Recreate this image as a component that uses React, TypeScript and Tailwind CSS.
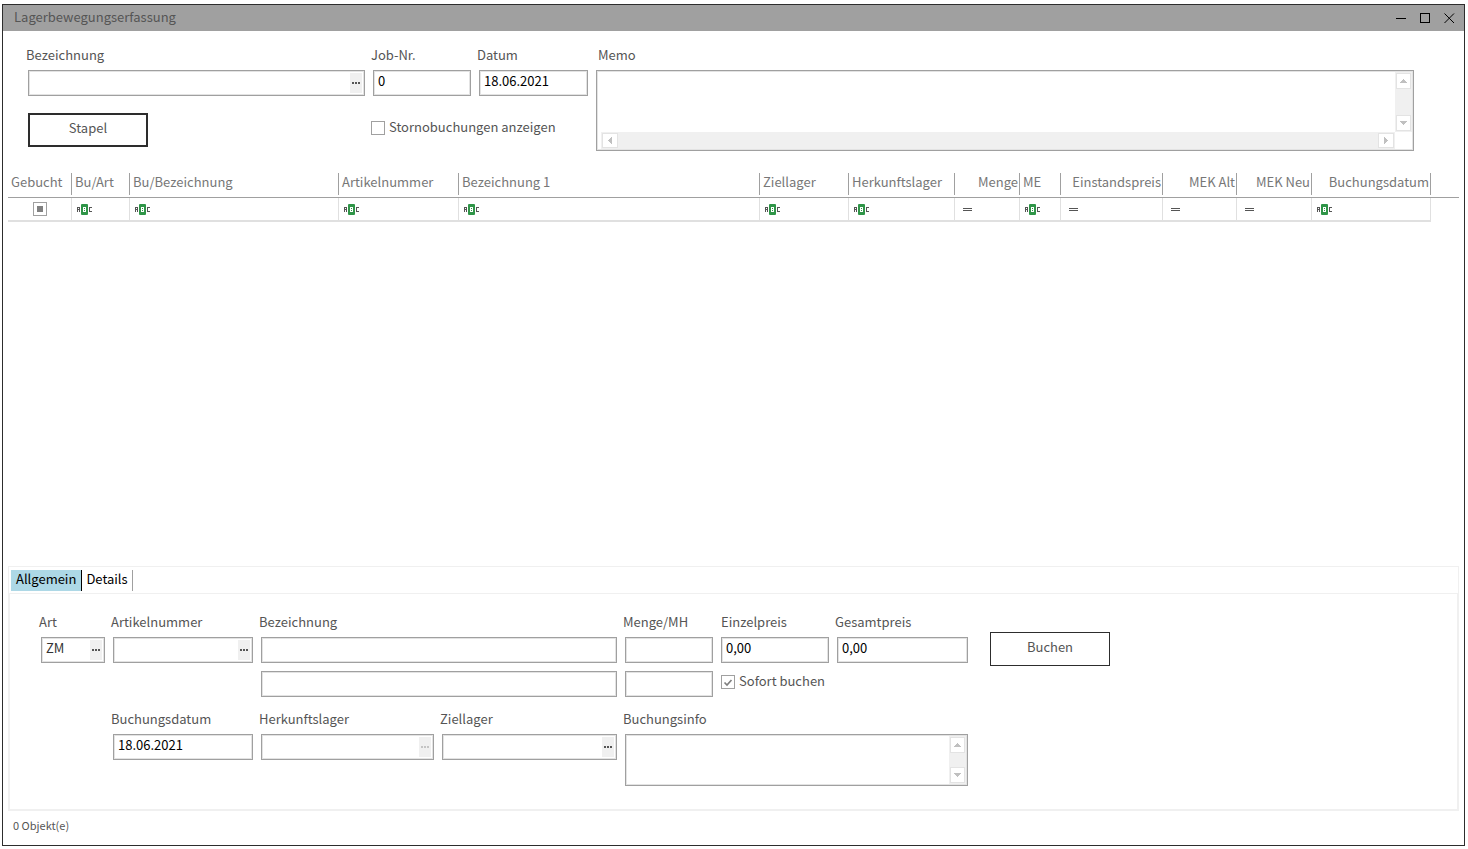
import React, { useEffect, useRef, useState } from 'react';

type FilterKind = 'check' | 'text' | 'number';

interface Column {
  title: string;
  width: string;
  filter: FilterKind;
  right?: boolean;
}

const columns: Column[] = [
  { title: 'Gebucht', width: 'w-[64px]', filter: 'check' },
  { title: 'Bu/Art', width: 'w-[58px]', filter: 'text' },
  { title: 'Bu/Bezeichnung', width: 'w-[209px]', filter: 'text' },
  { title: 'Artikelnummer', width: 'w-[120px]', filter: 'text' },
  { title: 'Bezeichnung 1', width: 'w-[301px]', filter: 'text' },
  { title: 'Ziellager', width: 'w-[89px]', filter: 'text' },
  { title: 'Herkunftslager', width: 'w-[106px]', filter: 'text' },
  { title: 'Menge', width: 'w-[65px]', filter: 'number', right: true },
  { title: 'ME', width: 'w-[41px]', filter: 'text' },
  { title: 'Einstandspreis', width: 'w-[102px]', filter: 'number', right: true },
  { title: 'MEK Alt', width: 'w-[74px]', filter: 'number', right: true },
  { title: 'MEK Neu', width: 'w-[75px]', filter: 'number', right: true },
  { title: 'Buchungsdatum', width: 'w-[119px]', filter: 'text', right: true },
];

const boxClass =
  'flex border border-[#a0a0a0] bg-white shadow-[inset_0_0_0_1px_#e3e3e3]';

const AbcIcon = () => (
  <svg width="15" height="11" viewBox="0 0 15 11" shapeRendering="crispEdges">
    <path d="M4 0h7v11H4z" fill="#5fb074" />
    <path d="M5 0h5v1h1v9h-1v1H5v-1H4V1h1z" fill="#2f9548" />
    <path d="M0 3h3v5H2V6H1v2H0zM1 4v1h1V4z" fill="#555" fillRule="evenodd" />
    <path d="M6 3h3v5H6zM7 4v1h1V4zM7 6v1h1V6z" fill="#fff" fillRule="evenodd" />
    <path d="M12 3h3v1h-2v3h2v1h-3z" fill="#555" />
  </svg>
);

const EqualsIcon = () => (
  <svg width="9" height="3" viewBox="0 0 9 3" shapeRendering="crispEdges">
    <path d="M0 0h9v1H0zM0 2h9v1H0z" fill="#555" />
  </svg>
);

const arrows = {
  up: 'M3 0h1v1h1v1h1v1h1v1H0V3h1V2h1V1h1z',
  down: 'M0 0h7v1H6v1H5v1H4v1H3V3H2V2H1V1H0z',
  left: 'M3 0h1v7H3V6H2V5H1V4H0V3h1V2h1V1h1z',
  right: 'M0 0h1v1h1v1h1v1h1v1H3v1H2v1H1v1H0z',
};

const ScrollButton = ({ dir }: { dir: keyof typeof arrows }) => {
  const vertical = dir === 'up' || dir === 'down';
  return (
    <button
      type="button"
      aria-label={`scroll ${dir}`}
      className={`flex shrink-0 items-center justify-center border border-[#e3e3e3] bg-white ${
        vertical ? 'h-4 w-[15px]' : 'h-[15px] w-4'
      }`}
    >
      <svg width={vertical ? 7 : 4} height={vertical ? 4 : 7} shapeRendering="crispEdges">
        <path d={arrows[dir]} fill="#c0c0c0" />
      </svg>
    </button>
  );
};

const VerticalBar = () => (
  <div className="flex w-[17px] shrink-0 flex-col items-center justify-between bg-[#f0f0f0] py-px">
    <ScrollButton dir="up" />
    <ScrollButton dir="down" />
  </div>
);

interface LabelProps {
  id: string;
  text: string;
  indent?: string;
}

const FieldLabel = ({ id, text, indent = '-ml-0.5' }: LabelProps) => (
  <label htmlFor={id} className={`mb-[5px] block leading-5 ${indent}`}>
    {text}
  </label>
);

interface TextBoxProps {
  id: string;
  value?: string;
  lookup?: boolean;
  disabled?: boolean;
  color?: string;
  label?: string;
}

const TextBox = ({ id, value = '', lookup, disabled, color = 'text-black', label }: TextBoxProps) => (
  <div className={`${boxClass} h-[26px]`}>
    <input
      id={id}
      type="text"
      aria-label={label}
      defaultValue={value}
      disabled={disabled}
      className={`min-w-0 flex-1 bg-transparent px-1 pb-1 outline-none ${color}`}
    />
    {lookup && (
      <button
        type="button"
        aria-label="Auswahl"
        disabled={disabled}
        className="m-0.5 flex w-3 shrink-0 items-center justify-center bg-[#f0f0f0]"
      >
        <svg width="8" height="2" shapeRendering="crispEdges">
          <path d="M0 0h2v2H0zM3 0h2v2H3zM6 0h2v2H6z" fill={disabled ? '#c4c4c4' : '#555'} />
        </svg>
      </button>
    )}
  </div>
);

const Field = ({ indent, className = '', ...box }: TextBoxProps & LabelProps & { className?: string }) => (
  <div className={className}>
    <FieldLabel id={box.id} text={box.text} indent={indent} />
    <TextBox {...box} />
  </div>
);

const CheckBox = ({ id, text, checked = false }: { id: string; text: string; checked?: boolean }) => {
  const [on, setOn] = useState(checked);
  return (
    <div className="flex items-center gap-1">
      <span className="grid">
        <input
          id={id}
          type="checkbox"
          checked={on}
          onChange={() => setOn(!on)}
          className="col-start-1 row-start-1 size-3.5 appearance-none border border-[#a0a0a0] bg-white"
        />
        {on && (
          <svg viewBox="0 0 14 14" className="pointer-events-none col-start-1 row-start-1 size-3.5">
            <path d="M3.5 7.5l2.5 2.5l4.5-5" fill="none" stroke="#808080" strokeWidth="1.7" />
          </svg>
        )}
      </span>
      <label htmlFor={id} className="pb-0.5 leading-5">{text}</label>
    </div>
  );
};

const MixedCheckBox = () => {
  const ref = useRef<HTMLInputElement>(null);

  useEffect(() => {
    if (ref.current) ref.current.indeterminate = true;
  }, []);

  return (
    <span className="mx-auto grid place-items-center">
      <input
        ref={ref}
        type="checkbox"
        aria-label="Gebucht filtern"
        className="col-start-1 row-start-1 size-3.5 appearance-none border border-[#a0a0a0] bg-white"
      />
      <span className="pointer-events-none col-start-1 row-start-1 size-1.5 bg-[#808080]" />
    </span>
  );
};

const FilterCell = ({ column }: { column: Column }) => {
  if (column.filter === 'check') return <MixedCheckBox />;
  const isText = column.filter === 'text';
  return (
    <button type="button" aria-label={`${column.title} filtern`} className={isText ? 'ml-[5px]' : 'ml-2'}>
      {isText ? <AbcIcon /> : <EqualsIcon />}
    </button>
  );
};

const TitleBar = () => (
  <header className="flex h-[26px] items-center justify-between bg-[#a0a0a0] pr-[9px] pl-[11px]">
    <h1 className="pb-0.5 leading-5">Lagerbewegungserfassung</h1>
    <div className="flex gap-[13px] text-black">
      <button type="button" aria-label="Minimieren">
        <svg width="11" height="11" shapeRendering="crispEdges">
          <path d="M0 5h10v1H0z" fill="currentColor" />
        </svg>
      </button>
      <button type="button" aria-label="Maximieren">
        <svg width="11" height="11" shapeRendering="crispEdges">
          <path d="M.5.5h9v9h-9z" fill="none" stroke="currentColor" />
        </svg>
      </button>
      <button type="button" aria-label="Schließen">
        <svg width="11" height="11">
          <path d="M.5.5l9.5 9.5M10 .5L.5 10" fill="none" stroke="currentColor" />
        </svg>
      </button>
    </div>
  </header>
);

const HeadForm = () => (
  <section className="flex gap-2 pt-3.5 pr-[50px] pl-[25px]">
    <div>
      <div className="flex gap-2">
        <Field id="bezeichnung" text="Bezeichnung" lookup className="w-[337px]" />
        <Field id="jobnr" text="Job-Nr." value="0" className="w-[98px]" />
        <Field id="datum" text="Datum" value="18.06.2021" className="w-[109px]" />
      </div>
      <div className="mt-[17px] flex items-start">
        <button type="button" className="h-[34px] w-[120px] border-2 border-[#2d2d2d] pb-1 leading-5">
          Stapel
        </button>
        <div className="mt-1 ml-[223px]">
          <CheckBox id="storno" text="Stornobuchungen anzeigen" />
        </div>
      </div>
    </div>
    <div className="min-w-0 flex-1">
      <FieldLabel id="memo" text="Memo" indent="ml-0.5" />
      <div className={`${boxClass} h-[81px] p-px`}>
        <div className="flex min-w-0 flex-1 flex-col">
          <textarea id="memo" className="min-h-0 flex-1 resize-none overflow-hidden bg-transparent px-1 text-black outline-none" />
          <div className="ml-[3px] flex h-[17px] items-center justify-between bg-[#f0f0f0] px-px">
            <ScrollButton dir="left" />
            <ScrollButton dir="right" />
          </div>
        </div>
        <div className="flex pb-[17px]">
          <VerticalBar />
        </div>
      </div>
    </div>
  </section>
);

const BookingTable = () => (
  <table className="w-full table-fixed border-separate border-spacing-0 text-[#777]">
    <colgroup>
      {columns.map((c) => (
        <col key={c.title} className={c.width} />
      ))}
      <col />
    </colgroup>
    <thead>
      <tr>
        {columns.map((c) => (
          <th key={c.title} className="border-b border-[#a0a0a0] p-0 pb-0.5 font-normal whitespace-nowrap">
            <div
              className={`h-[22px] border-r border-[#a0a0a0] leading-[18px] ${
                c.right ? 'pr-px text-right' : 'pl-[3px] text-left'
              }`}
            >
              {c.title}
            </div>
          </th>
        ))}
        <td className="border-b border-[#a0a0a0] p-0" />
      </tr>
    </thead>
    <tbody>
      <tr>
        {columns.map((c) => (
          <td key={c.title} className="border-b-2 border-[#e0e0e0] p-0">
            <div className="flex h-[22px] items-center border-r border-[#e0e0e0]">
              <FilterCell column={c} />
            </div>
          </td>
        ))}
        <td className="p-0" />
      </tr>
    </tbody>
  </table>
);

const BookingForm = () => (
  <div className="flex items-start gap-[22px] px-[31px] pt-[18px] pb-[23px]">
    <div className="grid grid-cols-[64px_140px_173px_175px_88px_108px_131px] gap-x-2">
      <Field id="art" text="Art" value="ZM" lookup color="text-[#333]" />
      <Field id="artikelnummer" text="Artikelnummer" lookup />
      <Field id="pos-bezeichnung" text="Bezeichnung" className="col-span-2" />
      <Field id="menge" text="Menge/MH" />
      <Field id="einzelpreis" text="Einzelpreis" value="0,00" indent="ml-0" />
      <Field id="gesamtpreis" text="Gesamtpreis" value="0,00" />

      <div className="col-span-2 col-start-3 mt-2">
        <TextBox id="bezeichnung2" label="Bezeichnung 2" />
      </div>
      <div className="mt-2">
        <TextBox id="menge2" label="MH" />
      </div>
      <div className="col-span-2 mt-2">
        <CheckBox id="sofort" text="Sofort buchen" checked />
      </div>

      <Field id="buchungsdatum" text="Buchungsdatum" value="18.06.2021" className="col-start-2 mt-3" />
      <Field id="herkunftslager" text="Herkunftslager" lookup disabled className="mt-3" />
      <Field id="ziellager" text="Ziellager" lookup className="mt-3" />
      <div className="col-span-3 mt-3">
        <FieldLabel id="buchungsinfo" text="Buchungsinfo" />
        <div className={`${boxClass} h-[52px] p-px`}>
          <textarea id="buchungsinfo" className="min-w-0 flex-1 resize-none overflow-hidden bg-transparent px-1 text-black outline-none" />
          <VerticalBar />
        </div>
      </div>
    </div>
    <button type="button" className="mt-5 h-[34px] w-[120px] border border-[#2d2d2d] pb-1 leading-5">
      Buchen
    </button>
  </div>
);

const App = () => {
  const [tab, setTab] = useState('Allgemein');

  return (
    <div className="flex min-h-screen bg-white pt-1 pr-[3px] pb-[3px] pl-0.5 font-['Noto_Sans_CJK_SC',sans-serif] text-[13px] text-[#555]">
      <div className="flex min-w-0 flex-1 flex-col border border-[#2d2d2d]">
        <TitleBar />
        <HeadForm />
        <main className="flex flex-1 flex-col px-[5px] pt-[22px]">
          <div className="flex-1">
            <BookingTable />
          </div>
          <section className="border border-[#f0f0f0]">
            <div role="tablist" className="flex h-[26px] items-start px-0.5 pt-[3px] text-black">
              {['Allgemein', 'Details'].map((name) => (
                <button
                  key={name}
                  type="button"
                  role="tab"
                  aria-selected={tab === name}
                  onClick={() => setTab(name)}
                  className={`h-[21px] border-r pb-1 leading-[17px] ${
                    tab === name ? 'border-black bg-[#add8e6] px-[5px]' : 'border-[#a0a0a0] px-1'
                  }`}
                >
                  {name}
                </button>
              ))}
            </div>
            <div className="border-x border-t border-b border-[#f0f0f0]">
              {tab === 'Allgemein' && <BookingForm />}
            </div>
          </section>
        </main>
        <footer className="px-2.5 pt-1 pb-2.5 text-[11px] leading-5">0 Objekt(e)</footer>
      </div>
    </div>
  );
};

export default App;
